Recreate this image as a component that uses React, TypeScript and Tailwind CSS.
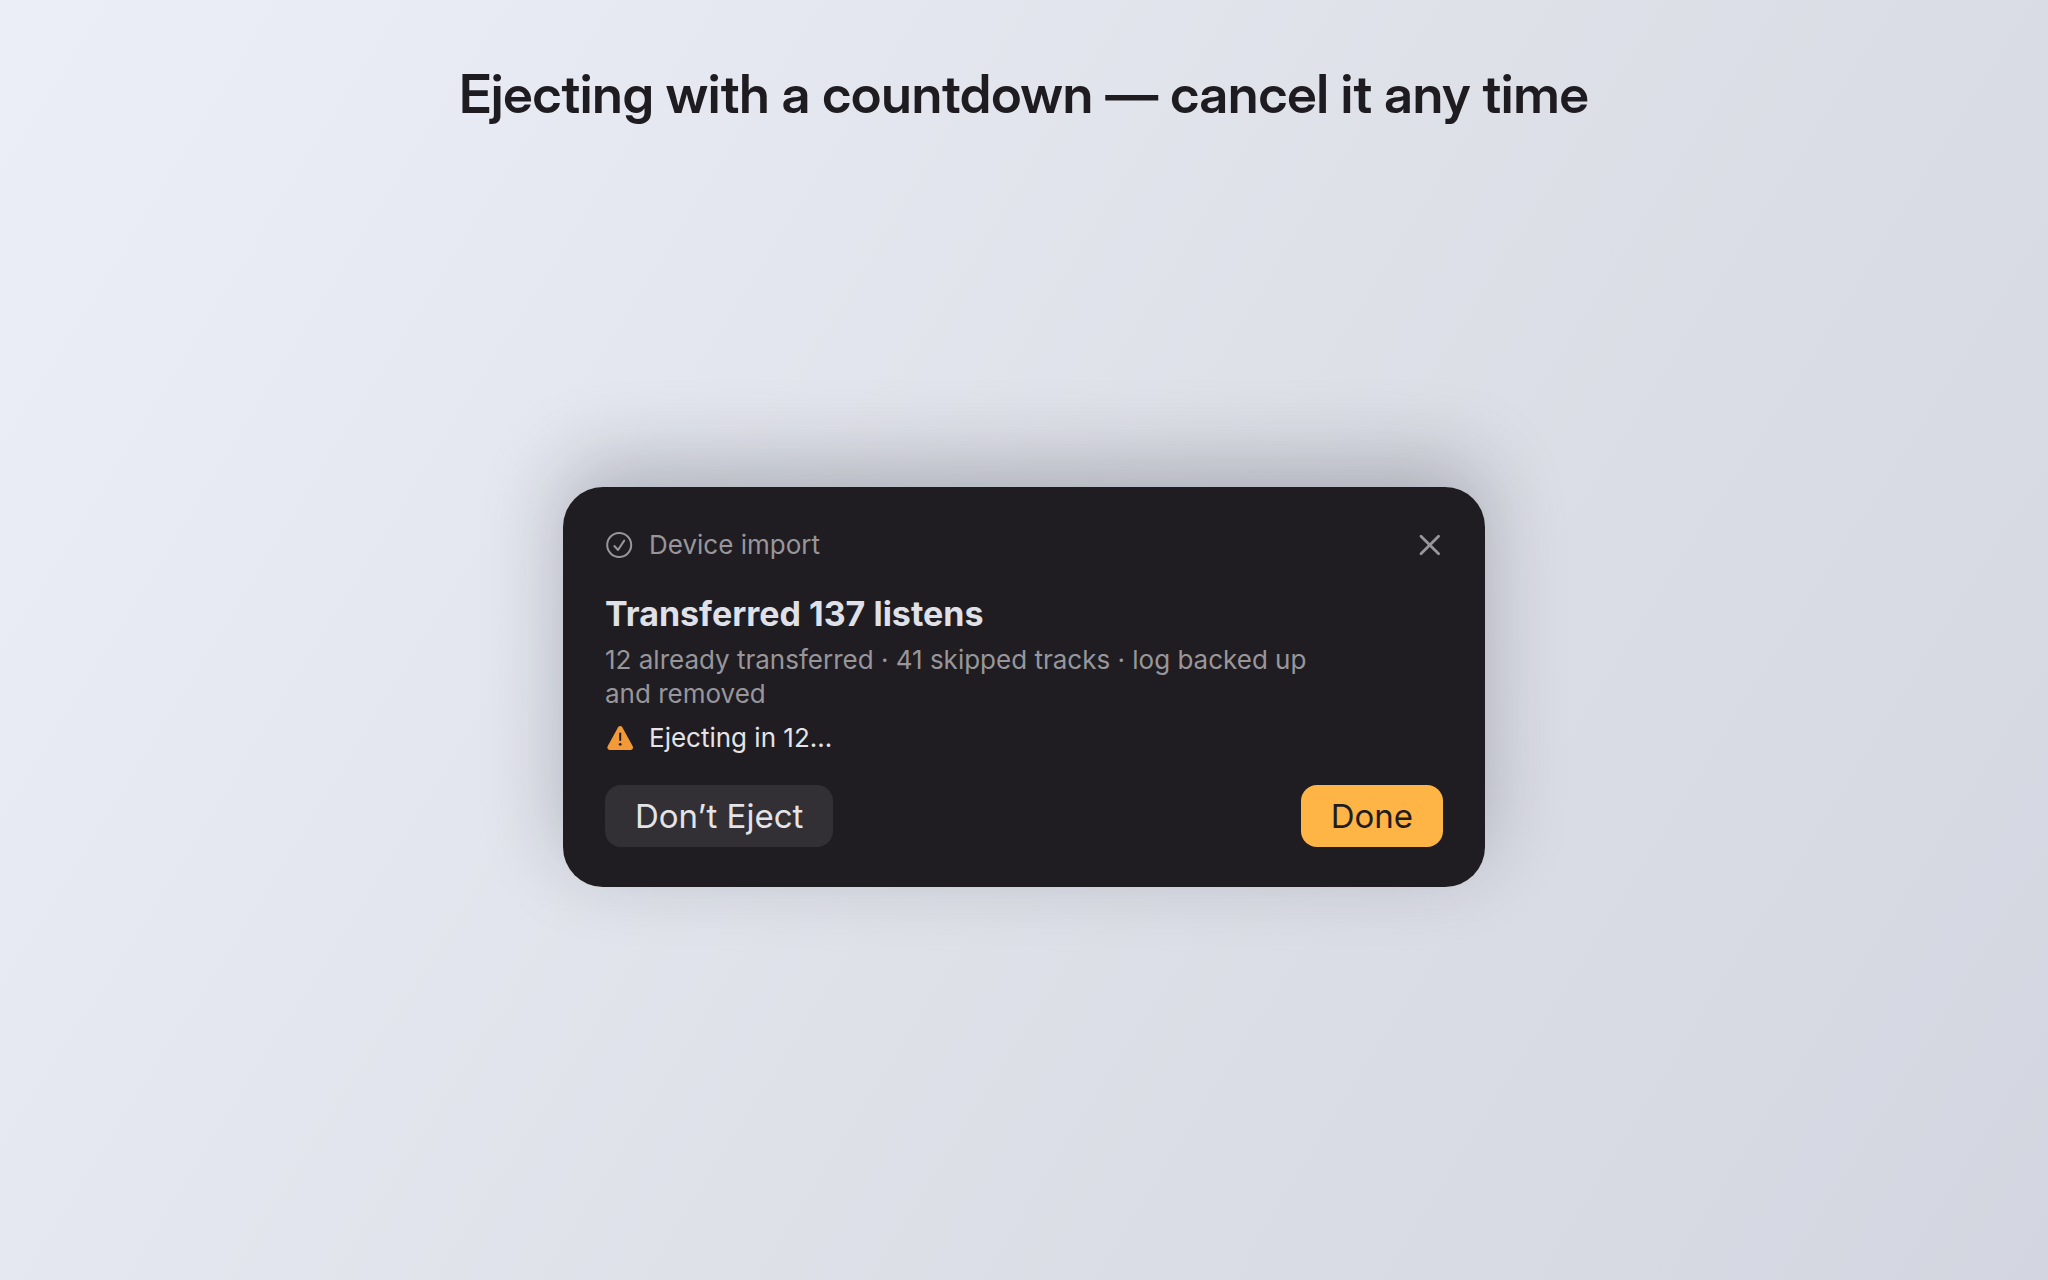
import React from "react";

function CheckCircleIcon() {
  return (
    <svg viewBox="0 0 28 28" className="h-7 w-7 shrink-0" fill="none" stroke="currentColor" aria-hidden="true">
      <circle cx="14.2" cy="14" r="12" strokeWidth="2" />
      <path d="M9.4 15 L13 19 L19.2 9.6" strokeWidth="2" strokeLinecap="round" strokeLinejoin="round" />
    </svg>
  );
}

function WarningIcon() {
  return (
    <svg viewBox="0 0 28 28" className="h-7 w-7 shrink-0" aria-hidden="true">
      <path
        d="M15.2 2 C16.1 2 16.8 2.4 17.3 3.2 L27.6 22 C28.6 23.9 27.6 26 25.6 26 L4.8 26 C2.8 26 1.8 23.9 2.8 22 L13.1 3.2 C13.6 2.4 14.3 2 15.2 2 Z"
        fill="#f29a37"
      />
      <path d="M15.2 9.4 V16" stroke="#1f1d21" strokeWidth="2" strokeLinecap="round" />
      <circle cx="15.2" cy="20.3" r="1.4" fill="#1f1d21" />
    </svg>
  );
}

function CloseIcon() {
  return (
    <svg viewBox="0 0 28 28" className="h-7 w-7" fill="none" stroke="currentColor" aria-hidden="true">
      <path d="M6 5.2 L23.6 22.8 M23.6 5.2 L6 22.8" strokeWidth="2.8" strokeLinecap="round" />
    </svg>
  );
}

export default function App() {
  return (
    <div className="flex min-h-screen flex-col bg-[linear-gradient(122deg,#ebeef7_0%,#e9ecf5_12%,#dfe1e9_52%,#d3d5e0_100%)] font-['Inter',sans-serif]">
      <header className="px-8 pt-[62px] text-center">
        <h1 className="font-['Inter_Display','Inter',sans-serif] text-[53px] leading-[64px] font-semibold text-[#1e1c20]">
          Ejecting with a countdown — cancel it any time
        </h1>
      </header>
      <main className="flex flex-1 items-center justify-center px-8 pb-8">
        <section
          aria-label="Device import"
          className="w-full max-w-[922px] rounded-[40px] bg-[#1f1d21] px-[42px] py-10 shadow-[0_-24px_80px_rgba(20,22,30,0.25)]"
        >
          <div className="flex h-9 items-center justify-between text-[#98969b]">
            <div className="flex items-center gap-4">
              <CheckCircleIcon />
              <span className="text-[26px] leading-[34px]">Device import</span>
            </div>
            <button type="button" aria-label="Close" className="flex h-7 w-7 items-center justify-center">
              <CloseIcon />
            </button>
          </div>
          <h2 className="mt-[31px] text-[34px] leading-10 font-bold text-[#dfe0e8]">Transferred 137 listens</h2>
          <p className="mt-[9px] max-w-[720px] text-[26px] leading-[34px] text-[#98969b]">
            12 already transferred · 41 skipped tracks · log backed up and removed
          </p>
          <div className="mt-[9px] flex h-9 items-center gap-4">
            <WarningIcon />
            <span className="text-[26px] leading-[34px] text-[#e4e3e7]">Ejecting in 12…</span>
          </div>
          <div className="mt-[29px] flex items-center justify-between">
            <button type="button" className="rounded-2xl bg-[#323035] px-[30px] py-[11px] text-[33px] leading-10 text-[#e4e3e7]">
              Don’t Eject
            </button>
            <button type="button" className="rounded-2xl bg-[#ffb546] px-[30px] py-[11px] text-[33px] leading-10 text-[#1f1d21]">
              Done
            </button>
          </div>
        </section>
      </main>
    </div>
  );
}
